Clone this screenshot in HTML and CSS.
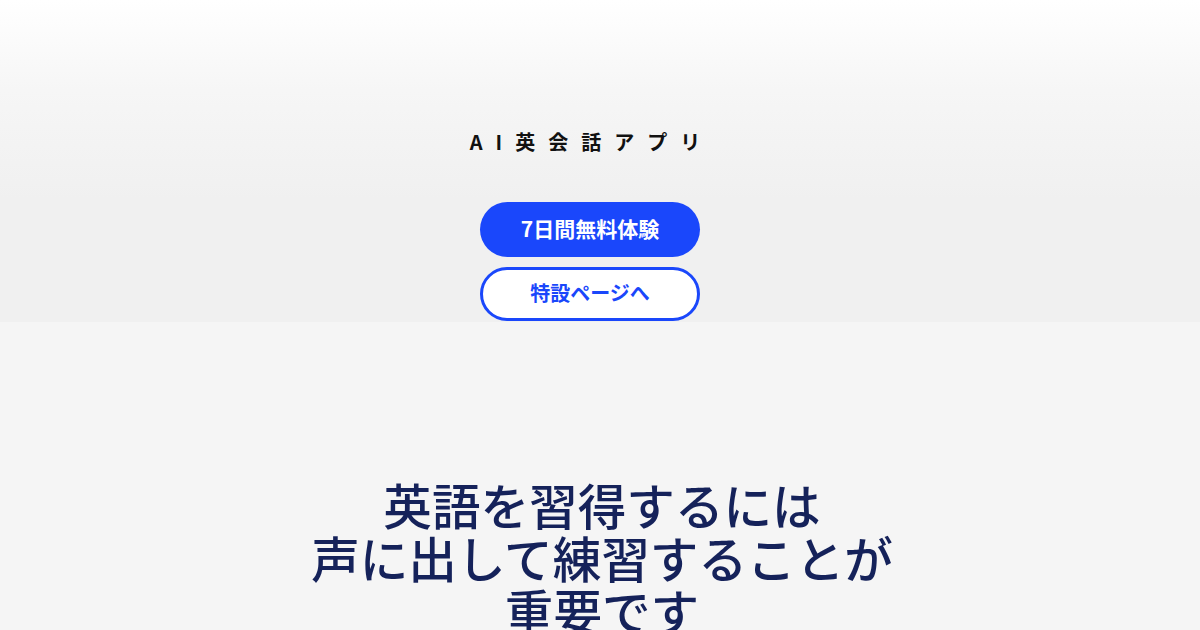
FILE: index.html
```html
<!DOCTYPE html>
<html lang="ja">
<head>
<meta charset="utf-8">
<link rel="stylesheet" href="styles.css">
</head>
<body>
<header class="hero">
  <h1 class="brand">AI英会話アプリ</h1>
  <div class="actions">
    <a class="btn btn-primary">7日間無料体験</a>
    <a class="btn btn-outline">特設ページへ</a>
  </div>
</header>
<main class="main">
  <h2 class="headline">英語を習得するには<br>声に出して練習することが<br>重要です</h2>
</main>
</body>
</html>
```
FILE: styles.css
```css
html, body {
  margin: 0;
  padding: 0;
}
body {
  width: 1200px;
  height: 630px;
  overflow: hidden;
  background: #f5f5f5;
  font-family: "Noto Sans CJK JP", "Noto Sans", sans-serif;
}
.hero {
  height: 322px;
  box-sizing: border-box;
  padding: 128px 20px 0 0;
  display: flex;
  flex-direction: column;
  align-items: center;
  background: linear-gradient(to bottom, #ffffff 0px, #f6f6f6 90px, #f0f0f0 200px, #f0f0f0 322px);
}
.brand {
  margin: 0 0 0 3px;
  font-size: 20px;
  line-height: 28px;
  font-weight: 700;
  letter-spacing: 13px;
  color: #111111;
}
.actions {
  margin-top: 46px;
  display: flex;
  flex-direction: column;
  gap: 10px;
}
.btn {
  width: 220px;
  box-sizing: border-box;
  display: flex;
  align-items: center;
  justify-content: center;
  border-radius: 28px;
  font-weight: 700;
  text-decoration: none;
  padding-bottom: 4px;
}
.btn-primary {
  height: 55px;
  font-size: 21px;
  background: #1a47fb;
  color: #ffffff;
}
.btn-outline {
  height: 54px;
  font-size: 20px;
  background: #ffffff;
  color: #1a47fb;
  border: 3px solid #1a47fb;
}
.main {
  padding-top: 156px;
  display: flex;
  justify-content: center;
}
.headline {
  margin: 0 0 0 4px;
  font-size: 48.6px;
  line-height: 53px;
  font-weight: 500;
  color: #15225a;
  text-align: center;
}
```
